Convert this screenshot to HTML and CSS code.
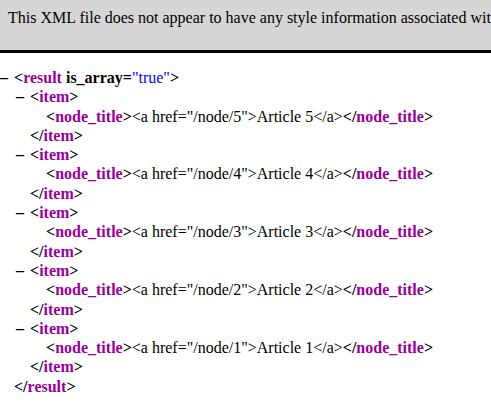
FILE: index.html
```html
<!DOCTYPE html>
<html>
<head>
    <link rel="stylesheet" href="styles.css">
</head>

<body>
    <header class="notice">
        This XML file does not appear to have any style information associated with it. The document tree is shown below.
    </header>
    <div class="tree">
        <div class="el">
            <div class="line"><span class="tog">&ndash;</span><span class="tag">&lt;<span class="name">result</span> <span class="attr">is_array</span>=<span class="val">"true"</span>&gt;</span></div>
            <div class="kids">
                <div class="el">
                    <div class="line"><span class="tog">&ndash;</span><span class="tag">&lt;<span class="name">item</span>&gt;</span></div>
                    <div class="kids">
                        <div class="line leaf"><span class="tag">&lt;<span class="name">node_title</span>&gt;</span>&lt;a href="/node/5"&gt;Article 5&lt;/a&gt;<span class="tag">&lt;/<span class="name">node_title</span>&gt;</span></div>
                    </div>
                    <div class="line leaf"><span class="tag">&lt;/<span class="name">item</span>&gt;</span></div>
                </div>
                <div class="el">
                    <div class="line"><span class="tog">&ndash;</span><span class="tag">&lt;<span class="name">item</span>&gt;</span></div>
                    <div class="kids">
                        <div class="line leaf"><span class="tag">&lt;<span class="name">node_title</span>&gt;</span>&lt;a href="/node/4"&gt;Article 4&lt;/a&gt;<span class="tag">&lt;/<span class="name">node_title</span>&gt;</span></div>
                    </div>
                    <div class="line leaf"><span class="tag">&lt;/<span class="name">item</span>&gt;</span></div>
                </div>
                <div class="el">
                    <div class="line"><span class="tog">&ndash;</span><span class="tag">&lt;<span class="name">item</span>&gt;</span></div>
                    <div class="kids">
                        <div class="line leaf"><span class="tag">&lt;<span class="name">node_title</span>&gt;</span>&lt;a href="/node/3"&gt;Article 3&lt;/a&gt;<span class="tag">&lt;/<span class="name">node_title</span>&gt;</span></div>
                    </div>
                    <div class="line leaf"><span class="tag">&lt;/<span class="name">item</span>&gt;</span></div>
                </div>
                <div class="el">
                    <div class="line"><span class="tog">&ndash;</span><span class="tag">&lt;<span class="name">item</span>&gt;</span></div>
                    <div class="kids">
                        <div class="line leaf"><span class="tag">&lt;<span class="name">node_title</span>&gt;</span>&lt;a href="/node/2"&gt;Article 2&lt;/a&gt;<span class="tag">&lt;/<span class="name">node_title</span>&gt;</span></div>
                    </div>
                    <div class="line leaf"><span class="tag">&lt;/<span class="name">item</span>&gt;</span></div>
                </div>
                <div class="el">
                    <div class="line"><span class="tog">&ndash;</span><span class="tag">&lt;<span class="name">item</span>&gt;</span></div>
                    <div class="kids">
                        <div class="line leaf"><span class="tag">&lt;<span class="name">node_title</span>&gt;</span>&lt;a href="/node/1"&gt;Article 1&lt;/a&gt;<span class="tag">&lt;/<span class="name">node_title</span>&gt;</span></div>
                    </div>
                    <div class="line leaf"><span class="tag">&lt;/<span class="name">item</span>&gt;</span></div>
                </div>
            </div>
            <div class="line leaf"><span class="tag">&lt;/<span class="name">result</span>&gt;</span></div>
        </div>
    </div>
</body>
</html>
```

FILE: styles.css
```css
body {
    margin: 0;
    font-family: "Liberation Serif", serif;
    font-size: 16px;
    color: #000;
    background: #fff;
    overflow: hidden;
}

.notice {
    height: 34px;
    padding: 8px;
    line-height: 19px;
    white-space: nowrap;
    overflow: hidden;
    background: #d6d6d6;
    border-bottom: 3px solid #000;
}

.tree {
    margin-top: 15px;
    line-height: 19.3px;
}
.line {
    white-space: nowrap;
}
.leaf {
    padding-left: 14px;
}
.kids {
    margin-left: 16px;
}
.tog {
    display: inline-block;
    width: 14px;
    font-weight: bold;
}

.tag {
    font-weight: bold;
}
.name {
    color: #990099;
}
.attr {
    font-weight: bold;
}
.val {
    color: #0000ff;
    font-weight: normal;
}
```
